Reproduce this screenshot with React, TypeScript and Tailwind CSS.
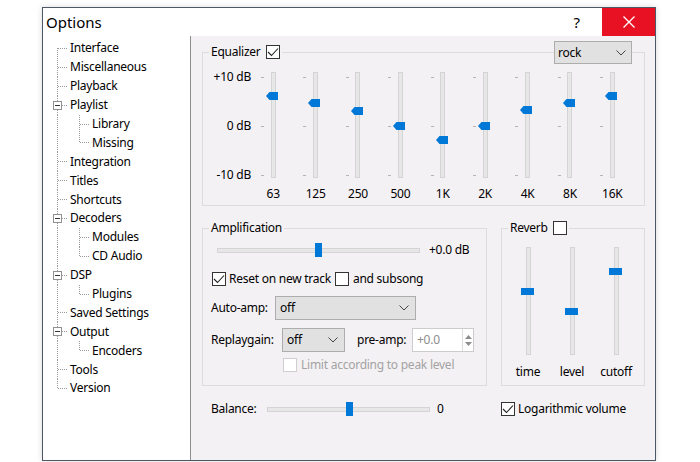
import React from "react";

type Node = { t: string; kids?: string[] };
const tree: Node[] = [
  { t: "Interface" },
  { t: "Miscellaneous" },
  { t: "Playback" },
  { t: "Playlist", kids: ["Library", "Missing"] },
  { t: "Integration" },
  { t: "Titles" },
  { t: "Shortcuts" },
  { t: "Decoders", kids: ["Modules", "CD Audio"] },
  { t: "DSP", kids: ["Plugins"] },
  { t: "Saved Settings" },
  { t: "Output", kids: ["Encoders"] },
  { t: "Tools" },
  { t: "Version" },
];

const DOT = "#9a9a9a";

function TopRow({ n, first, last }: { n: Node; first: boolean; last: boolean }) {
  return (
    <div className="h-[18.9px] flex items-center">
      <svg width="27" height="19" className="shrink-0" shapeRendering="crispEdges">
        <line x1="14.5" y1={first ? 9 : 0} x2="14.5" y2={last ? 10 : 19} stroke={DOT} strokeDasharray="1 1" />
        <line x1={n.kids ? 19 : 15} y1="9.5" x2="25" y2="9.5" stroke={DOT} strokeDasharray="1 1" />
        {n.kids && (
          <>
            <rect x="10.5" y="5.5" width="8" height="8" fill="white" stroke="#919191" />
            <line x1="12" y1="9.5" x2="17" y2="9.5" stroke="#333" />
          </>
        )}
      </svg>
      <span>{n.t}</span>
    </div>
  );
}

function ChildRow({ t, last }: { t: string; last: boolean }) {
  return (
    <div className="h-[18.9px] flex items-center">
      <svg width="49" height="19" className="shrink-0" shapeRendering="crispEdges">
        <line x1="14.5" y1="0" x2="14.5" y2="19" stroke={DOT} strokeDasharray="1 1" />
        <line x1="36.5" y1="0" x2="36.5" y2={last ? 10 : 19} stroke={DOT} strokeDasharray="1 1" />
        <line x1="37" y1="9.5" x2="47" y2="9.5" stroke={DOT} strokeDasharray="1 1" />
      </svg>
      <span>{t}</span>
    </div>
  );
}

function Check({ checked, disabled }: { checked?: boolean; disabled?: boolean }) {
  return (
    <span
      className={
        "w-[14px] h-[14px] border bg-white flex items-center justify-center shrink-0 " +
        (disabled ? "border-[#cfcfcf]" : "border-[#333333]")
      }
    >
      {checked && (
        <svg width="12" height="10" viewBox="0 0 12 10">
          <path d="M1 5 L4.5 8.5 L11 1.5" stroke="#222" strokeWidth="1.1" fill="none" />
        </svg>
      )}
    </span>
  );
}

function Chevron() {
  return (
    <svg width="10" height="6" viewBox="0 0 10 6" className="shrink-0">
      <path d="M0.5 0.5 L5 5 L9.5 0.5" stroke="#444" strokeWidth="1" fill="none" />
    </svg>
  );
}

const eq: [string, number][] = [
  ["63", 24],
  ["125", 31],
  ["250", 39],
  ["500", 54],
  ["1K", 68],
  ["2K", 54],
  ["4K", 38],
  ["8K", 31],
  ["16K", 24],
];

function EqSlider({ label, pos }: { label: string; pos: number }) {
  return (
    <div className="w-[42.4px] flex flex-col items-center shrink-0">
      <div className="relative w-full h-[106px] flex justify-center">
        <div className="w-[5px] h-full bg-[#e7e7e7] border border-[#d4d4d4]" />
        <div className="absolute left-[9px] top-[5px] w-[3px] h-[1px] bg-[#b4b4b4]" />
        <div className="absolute left-[9px] top-[54px] w-[3px] h-[1px] bg-[#b4b4b4]" />
        <div className="absolute left-[9px] top-[103px] w-[3px] h-[1px] bg-[#b4b4b4]" />
        <svg
          width="12"
          height="8"
          viewBox="0 0 12 8"
          className="absolute left-[14px]"
          style={{ top: pos - 4 }}
        >
          <polygon points="0,4 3.5,0 12,0 12,8 3.5,8" fill="#0078d7" />
        </svg>
      </div>
      <div className="mt-[8px] h-[16px] leading-[16px]">{label}</div>
    </div>
  );
}

function VSlider({ label, pos }: { label: string; pos: number }) {
  return (
    <div className="w-[44px] flex flex-col items-center shrink-0">
      <div className="relative w-full h-[108px] flex justify-center">
        <div className="w-[5px] h-full bg-[#e7e7e7] border border-[#d4d4d4]" />
        <div
          className="absolute left-[15px] w-[13px] h-[7px] bg-[#0078d7]"
          style={{ top: pos - 3 }}
        />
      </div>
      <div className="mt-[9px] h-[16px] leading-[16px]">{label}</div>
    </div>
  );
}

function HSlider({ w, thumb }: { w: string; thumb: number }) {
  return (
    <div className={"relative h-[16px] flex items-center shrink-0 " + w}>
      <div className="w-full h-[5px] bg-[#e7e7e7] border border-[#d4d4d4]" />
      <div className="absolute top-[1px] w-[7px] h-[14px] bg-[#0078d7]" style={{ left: thumb }} />
    </div>
  );
}

export default function App() {
  const rows: React.ReactNode[] = [];
  tree.forEach((n, i) => {
    rows.push(<TopRow key={n.t} n={n} first={i === 0} last={i === tree.length - 1} />);
    n.kids?.forEach((k, j) =>
      rows.push(<ChildRow key={k} t={k} last={j === (n.kids as string[]).length - 1} />)
    );
  });

  return (
    <div className="w-[700px] h-[462px] bg-white font-['Noto_Sans','DejaVu_Sans',sans-serif] text-[12px] text-black leading-[14px] tracking-[-0.25px] pt-[7px] pl-[42px]">
      <div className="w-[614px] h-[454px] border border-[#4d5866] flex flex-col bg-white shadow-[0_0_6px_rgba(0,0,0,0.15)]">
        {/* title bar */}
        <div className="h-[28px] flex items-center shrink-0 tracking-normal">
          <span className="pl-[3px] text-[15px] leading-[20px]">Options</span>
          <span className="ml-auto mr-[22px] text-[15px] leading-[20px]">?</span>
          <div className="w-[53px] h-full bg-[#e81123] flex items-center justify-center">
            <svg width="12" height="12" viewBox="0 0 12 12">
              <path d="M0.5 0.5 L11.5 11.5 M11.5 0.5 L0.5 11.5" stroke="white" strokeWidth="1.3" />
            </svg>
          </div>
        </div>
        {/* body */}
        <div className="flex-1 flex min-h-0">
          <div className="w-[148px] shrink-0 bg-white border-r border-[#8c8c8c] pt-[3px]">{rows}</div>
          <div className="flex-1 bg-[#f4f1f4] pt-[9px] pl-[11px] pr-[8px] flex flex-col">
            {/* Equalizer */}
            <fieldset className="relative border border-[#dcdcdc] w-[443px]">
              <legend className="ml-[6px] px-[2px]">
                <span className="h-[14px] flex items-center gap-[5px]">
                  Equalizer <Check checked />
                </span>
              </legend>
              <div className="absolute top-[-18px] right-[12px] w-[78px] h-[23px] bg-[#e1e1e1] border border-[#adadad] flex items-center justify-between pl-[3px] pr-[5px]">
                <span>rock</span>
                <Chevron />
              </div>
              <div className="flex items-start pt-[13px] pb-[3px]">
                <div className="w-[49px] h-[112px] -mt-[2px] flex flex-col justify-between items-end pr-[1px] shrink-0">
                  <span>+10 dB</span>
                  <span>0 dB</span>
                  <span>-10 dB</span>
                </div>
                {eq.map(([l, p]) => (
                  <EqSlider key={l} label={l} pos={p} />
                ))}
              </div>
            </fieldset>

            <div className="flex gap-[14px] mt-[15px]">
              {/* Amplification */}
              <fieldset className="border border-[#dcdcdc] w-[285px] shrink-0">
                <legend className="ml-[6px] px-[2px]">
                  <span className="h-[14px] flex items-center">Amplification</span>
                </legend>
                <div className="flex flex-col pb-[13px]">
                  <div className="mt-[7px] pl-[14px] flex items-center h-[16px]">
                    <HSlider w="w-[203px]" thumb={98} />
                    <span className="ml-[9px]">+0.0 dB</span>
                  </div>
                  <div className="mt-[14px] pl-[9px] flex items-center h-[14px]">
                    <Check checked />
                    <span className="ml-[3px]">Reset on new track</span>
                    <span className="ml-[4px]">
                      <Check />
                    </span>
                    <span className="ml-[4px]">and subsong</span>
                  </div>
                  <div className="mt-[10px] pl-[8px] flex items-center h-[24px]">
                    <span className="w-[64px] shrink-0">Auto-amp:</span>
                    <div className="w-[141px] h-[24px] bg-[#e1e1e1] border border-[#adadad] flex items-center justify-between pl-[4px] pr-[6px]">
                      <span>off</span>
                      <Chevron />
                    </div>
                  </div>
                  <div className="mt-[8px] pl-[8px] flex items-center h-[24px]">
                    <span className="w-[71px] shrink-0">Replaygain:</span>
                    <div className="w-[63px] h-[24px] bg-[#e1e1e1] border border-[#adadad] flex items-center justify-between pl-[4px] pr-[6px]">
                      <span>off</span>
                      <Chevron />
                    </div>
                    <span className="ml-[12px] w-[55px] shrink-0">pre-amp:</span>
                    <div className="w-[62px] h-[24px] bg-white border border-[#cccccc] flex items-center">
                      <span className="pl-[4px] flex-1 text-[#8d8d8d]">+0.0</span>
                      <div className="w-[11px] h-full border-l border-[#dcdcdc] flex flex-col items-center justify-center gap-[3px]">
                        <svg width="7" height="4" viewBox="0 0 7 4">
                          <polygon points="0,4 3.5,0 7,4" fill="#8d8d8d" />
                        </svg>
                        <svg width="7" height="4" viewBox="0 0 7 4">
                          <polygon points="0,0 3.5,4 7,0" fill="#8d8d8d" />
                        </svg>
                      </div>
                    </div>
                  </div>
                  <div className="mt-[6px] pl-[80px] flex items-center h-[14px]">
                    <Check disabled />
                    <span className="ml-[4px] text-[#a3a3a3]">Limit according to peak level</span>
                  </div>
                </div>
              </fieldset>

              {/* Reverb */}
              <fieldset className="border border-[#dcdcdc] w-[144px] shrink-0">
                <legend className="ml-[6px] px-[2px]">
                  <span className="h-[14px] flex items-center gap-[5px]">
                    Reverb <Check />
                  </span>
                </legend>
                <div className="flex pl-[4px] mt-[12px] pb-[5px]">
                  <VSlider label="time" pos={44} />
                  <VSlider label="level" pos={64} />
                  <VSlider label="cutoff" pos={24} />
                </div>
              </fieldset>
            </div>

            {/* Balance row */}
            <div className="mt-[15px] flex items-center h-[16px]">
              <div className="w-[299px] shrink-0 pl-[9px] flex items-center">
                <span className="w-[56px] shrink-0">Balance:</span>
                <HSlider w="w-[163px]" thumb={79} />
                <span className="ml-[7px]">0</span>
              </div>
              <Check checked />
              <span className="ml-[3px]">Logarithmic volume</span>
            </div>
          </div>
        </div>
      </div>
    </div>
  );
}
